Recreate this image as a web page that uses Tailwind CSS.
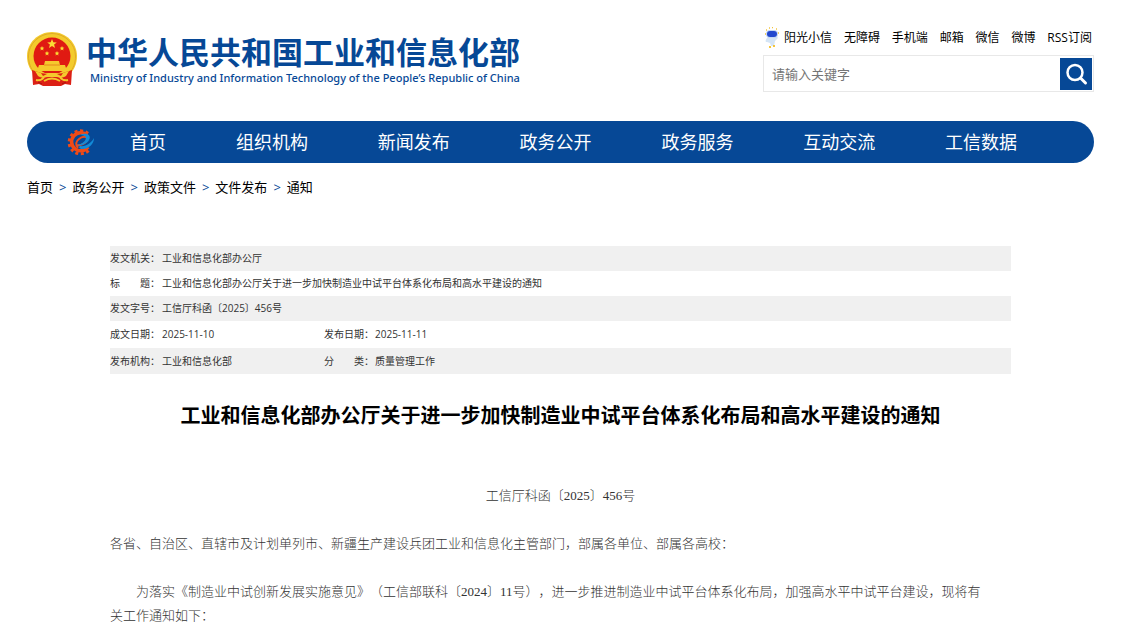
<!DOCTYPE html>
<html lang="zh-CN">
<head>
  <meta charset="UTF-8">
  <meta name="viewport" content="width=device-width, initial-scale=1.0">
  <title>工业和信息化部办公厅关于进一步加快制造业中试平台体系化布局和高水平建设的通知</title>
  <!-- Tailwind CSS -->
  <script src="https://cdn.jsdelivr.net/npm/@tailwindcss/browser@4"></script>
</head>
<body class="bg-white pr-[18px] font-['Open_Sans','Noto_Sans_CJK_SC',sans-serif] text-black overflow-hidden">
  <div class="mx-[27px]">

    <!-- Header -->
    <header class="flex justify-between h-[121px]">
      <a href="#" class="flex items-start pt-8">
        <svg class="w-[50px] h-[54px]" viewBox="0 0 50 54" aria-hidden="true">
          <path d="M25 0C11 0 0 11 0 24c0 8 3 14 8 19h34c5-5 8-11 8-19C50 11 39 0 25 0z" fill="#f3cb2c"/>
          <path d="M25 1.500C12 1.500 1.500 12 1.500 24c0 7 2 12 6 17M25 1.500c13 0 23.500 10.500 23.500 22.500 0 7-2 12-6 17" fill="none" stroke="#e0a928" stroke-width="1"/>
          <circle cx="25" cy="24" r="18.500" fill="#e01a12"/>
          <path d="M25 7l1.300 3.200 3.500.2-2.700 2.200.9 3.400-3-1.900-3 1.900.9-3.400-2.700-2.200 3.500-.2z" fill="#fbdc35"/>
          <path d="M15 14l.7 1.500 1.600.2-1.200 1.100.3 1.600-1.400-.8-1.400.8.3-1.600-1.200-1.100 1.600-.2zM35 14l.7 1.500 1.600.2-1.200 1.100.3 1.600-1.400-.8-1.400.8.3-1.600-1.200-1.100 1.600-.2zM20 19l.7 1.500 1.600.2-1.200 1.100.3 1.600-1.400-.8-1.400.8.3-1.600-1.200-1.100 1.600-.2zM30 19l.7 1.500 1.600.2-1.200 1.100.3 1.600-1.400-.8-1.400.8.3-1.600-1.200-1.100 1.600-.2z" fill="#fbdc35"/>
          <path d="M18 29h14l1 4h-16zM12 33h26l2 6H10z" fill="#f5c92d"/>
          <path d="M17 33h16" stroke="#e58a1d"/>
          <path d="M5 38l6 2c9 3 19 3 28 0l6-2-1 15-6-1-4 2H16l-4-2-6 1z" fill="#dc2015"/>
          <path d="M8 39c7 3 11 2 17 2s10 1 17-2l-3 5c-3 2-6 2-9 1h-10c-3 1-6 1-9-1z" fill="#f5c92d"/>
          <path d="M14 41l6 1-4 2zM36 41l-6 1 4 2z" fill="#dc2015"/>
          <path d="M17 45c-2 3-4 4-8 3M33 45c2 3 4 4 8 3M17 49c5-3 11-3 16 0" fill="none" stroke="#f5c92d" stroke-width="2"/>
          <path d="M11 50l4 2M39 50l-4 2" stroke="#a51511"/>
        </svg>
        <span class="ml-[9px] text-[#064896]">
          <span class="block text-[31px] leading-[40px] font-bold">中华人民共和国工业和信息化部</span>
          <span class="block pl-1 text-[11px] leading-[12px] font-['Noto_Sans',sans-serif] font-medium">Ministry of Industry and Information Technology of the People’s Republic of China</span>
        </span>
      </a>

      <div class="w-[331px] pt-[26px]">
        <nav class="flex items-center justify-between h-6 pl-[1px] pr-[2px] text-[12px] whitespace-nowrap">
          <a href="#" class="flex items-center gap-1">
            <svg class="w-4 h-[22px]" viewBox="0 0 16 22" aria-hidden="true">
              <path d="M2 3h1M5 1h1M8 0.600h1M12 2h1M1 7h1M14 6h1" stroke="#f4c53d" stroke-width="1.500"/>
              <path d="M4 10c-3 3-3 5-1 5l3 1 1 3h3l1-5 3-3-2-3z" fill="#d5e5f6"/>
              <rect x="2" y="3" width="12" height="8" rx="4" fill="#c6d8f1"/>
              <rect x="3" y="4" width="10" height="6" rx="3" fill="#2449ce"/>
              <path d="M6 19v2M10 18v2" stroke="#f4c53d" stroke-width="2"/>
            </svg>阳光小信</a>
          <a href="#">无障碍</a>
          <a href="#">手机端</a>
          <a href="#">邮箱</a>
          <a href="#">微信</a>
          <a href="#">微博</a>
          <a href="#">RSS订阅</a>
        </nav>
        <form class="flex items-center mt-[5px] h-[37px] border border-[#e8e8e8] pr-[1px]">
          <input type="text" aria-label="搜索" placeholder="请输入关键字" class="flex-1 min-w-0 h-full px-2 text-[13px] placeholder:text-[#757575] focus:outline-none">
          <button type="submit" aria-label="搜索" class="flex items-center justify-center size-8 bg-[#064896]">
            <svg class="size-6" viewBox="0 0 24 24" fill="none" stroke="#fff" aria-hidden="true">
              <circle cx="11" cy="10.500" r="7.500" stroke-width="2.500"/>
              <path d="M16.500 16l5 5" stroke-width="3" stroke-linecap="round"/>
            </svg>
          </button>
        </form>
      </div>
    </header>

    <!-- Navbar -->
    <nav class="flex items-center h-[42px] rounded-full bg-[#064896] pl-10 pr-[42px] text-white text-[18px]">
      <svg class="w-7 h-7 shrink-0" viewBox="0 0 28 28" fill="none" aria-hidden="true">
        <path d="M21 5.500A11.500 11.500 0 1 0 23 21" stroke="#f04a16" stroke-width="3" stroke-dasharray="3 2.500"/>
        <path d="M20 7.500A9 9 0 1 0 21 19" stroke="#f04a16" stroke-width="3.500"/>
        <path d="M9 17c5 1 11-2 11-6 0-3-5-3-8 0-3 2-4 6-1 9" stroke="#f04a16" stroke-width="2"/>
        <path d="M13 7c6-3 12 0 9 5-2 4-8 6-12 5 5-1 9-4 9-7 0-2-3-3-6-3z" fill="#128bd8"/>
        <path d="M13 18c6 1 11-3 14-8 0 6-5 11-12 11-2 0-4-2-2-3z" fill="#128bd8"/>
      </svg>
      <a href="#" class="w-[106px] text-center">首页</a>
      <div class="flex-1 grid grid-cols-6 text-center whitespace-nowrap">
        <a href="#">组织机构</a>
        <a href="#">新闻发布</a>
        <a href="#">政务公开</a>
        <a href="#">政务服务</a>
        <a href="#">互动交流</a>
        <a href="#">工信数据</a>
      </div>
    </nav>

    <!-- Breadcrumb -->
    <nav class="flex gap-[6px] mt-[14px] text-[13px] leading-5" aria-label="当前位置">
      <a href="#">首页</a><span class="text-[#064896]">&gt;</span>
      <a href="#">政务公开</a><span class="text-[#064896]">&gt;</span>
      <a href="#">政策文件</a><span class="text-[#064896]">&gt;</span>
      <a href="#">文件发布</a><span class="text-[#064896]">&gt;</span>
      <a href="#">通知</a>
    </nav>

    <main class="mx-[83px] mt-[49px]">
      <!-- Document info -->
      <table class="w-full table-fixed text-[10px] text-[#333] text-left">
        <colgroup>
          <col class="w-[52px]">
          <col class="w-[162px]">
          <col class="w-[51px]">
          <col>
        </colgroup>
        <tbody>
          <tr class="h-[25px] bg-[#f0f0f0]"><th class="font-normal whitespace-nowrap">发文机关：</th><td colspan="3">工业和信息化部办公厅</td></tr>
          <tr class="h-[25px]"><th class="font-normal whitespace-nowrap">标　　题：</th><td colspan="3">工业和信息化部办公厅关于进一步加快制造业中试平台体系化布局和高水平建设的通知</td></tr>
          <tr class="h-[25px] bg-[#f0f0f0]"><th class="font-normal whitespace-nowrap">发文字号：</th><td colspan="3">工信厅科函〔2025〕456号</td></tr>
          <tr class="h-[27px]"><th class="font-normal whitespace-nowrap">成文日期：</th><td>2025-11-10</td><th class="font-normal whitespace-nowrap">发布日期：</th><td>2025-11-11</td></tr>
          <tr class="h-[26px] bg-[#f0f0f0]"><th class="font-normal whitespace-nowrap">发布机构：</th><td>工业和信息化部</td><th class="font-normal whitespace-nowrap">分　　类：</th><td>质量管理工作</td></tr>
        </tbody>
      </table>

      <!-- Article -->
      <h1 class="mt-[27px] text-center text-[20px] leading-[30px] font-bold">工业和信息化部办公厅关于进一步加快制造业中试平台体系化布局和高水平建设的通知</h1>
      <article class="mt-[53px] text-[13px] leading-6 text-[#333] font-['Liberation_Serif','Noto_Sans_CJK_SC',serif] font-light [text-spacing-trim:space-all]">
        <p class="text-center">工信厅科函〔2025〕456号</p>
        <p class="mt-6">各省、自治区、直辖市及计划单列市、新疆生产建设兵团工业和信息化主管部门，部属各单位、部属各高校：</p>
        <p class="mt-6 pr-6 indent-[26px]">为落实《制造业中试创新发展实施意见》（工信部联科〔2024〕11号），进一步推进制造业中试平台体系化布局，加强高水平中试平台建设，现将有关工作通知如下：</p>
      </article>
    </main>

  </div>
</body>
</html>
